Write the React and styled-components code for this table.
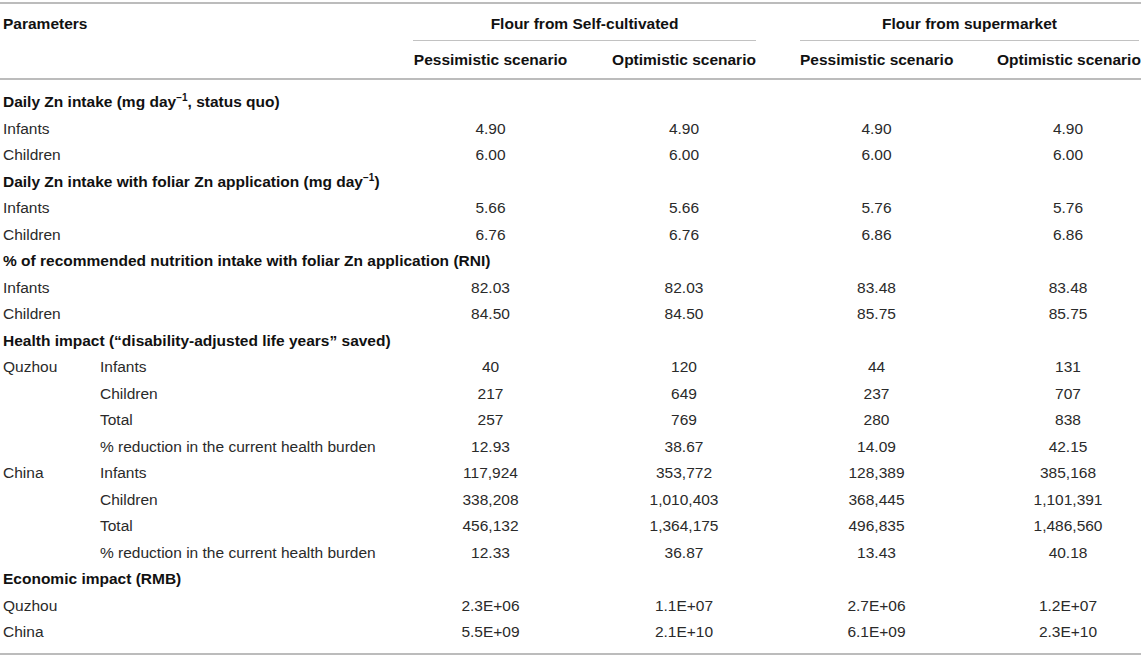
import React from 'react'
import styled, { createGlobalStyle } from 'styled-components'

const GlobalStyle = createGlobalStyle`
  html, body {
    margin: 0;
    padding: 0;
    background: #fff;
  }
  body {
    font-family: "Liberation Sans", Arial, Helvetica, sans-serif;
    color: #2a2a2a;
  }
`

const Page = styled.div`
  padding-top: 2px;
  width: 1143px;
`

const Table = styled.table`
  width: 1141px;
  table-layout: fixed;
  border-collapse: collapse;
  font-size: 15.5px;
  line-height: 18.5px;
  border-top: 2px solid #bcbcbc;
  border-bottom: 2px solid #bcbcbc;

  thead {
    border-bottom: 2px solid #bcbcbc;
  }
`

const Sup = styled.sup`
  font-size: 10px;
  line-height: 0;
  vertical-align: 6px;
`

const HeadCell = styled.th`
  text-align: left;
  vertical-align: top;
  font-weight: bold;
  color: #111;
  padding: 11px 3px 0;
`

const GroupCell = styled.th`
  padding: 11px 2px 0 42px;
  font-weight: bold;
  color: #111;
`

const GroupLabel = styled.div`
  text-align: center;
  padding-bottom: 6px;
  border-bottom: 1px solid #c2c2c2;
`

const ScenarioCell = styled.th`
  padding: 10px 2px 9px 42px;
  text-align: center;
  font-weight: bold;
  color: #111;
  white-space: nowrap;
`

const SectionCell = styled.td`
  padding: ${p => (p.$first ? '13px' : '4px')} 3px 4px;
  font-weight: bold;
  color: #111;
  white-space: nowrap;
`

const LabelCell = styled.td`
  padding: 4px 3px ${p => (p.$last ? '11px' : '4px')};
  white-space: nowrap;
`

const ValueCell = styled.td`
  padding: 4px 2px ${p => (p.$last ? '11px' : '4px')} 42px;
  text-align: center;
  white-space: nowrap;
`

const sections = [
  {
    title: <>Daily Zn intake (mg day<Sup>−1</Sup>, status quo)</>,
    rows: [
      { label: 'Infants', values: ['4.90', '4.90', '4.90', '4.90'] },
      { label: 'Children', values: ['6.00', '6.00', '6.00', '6.00'] },
    ],
  },
  {
    title: <>Daily Zn intake with foliar Zn application (mg day<Sup>−1</Sup>)</>,
    rows: [
      { label: 'Infants', values: ['5.66', '5.66', '5.76', '5.76'] },
      { label: 'Children', values: ['6.76', '6.76', '6.86', '6.86'] },
    ],
  },
  {
    title: '% of recommended nutrition intake with foliar Zn application (RNI)',
    rows: [
      { label: 'Infants', values: ['82.03', '82.03', '83.48', '83.48'] },
      { label: 'Children', values: ['84.50', '84.50', '85.75', '85.75'] },
    ],
  },
  {
    title: 'Health impact (“disability-adjusted life years” saved)',
    rows: [
      { region: 'Quzhou', label: 'Infants', values: ['40', '120', '44', '131'] },
      { region: '', label: 'Children', values: ['217', '649', '237', '707'] },
      { region: '', label: 'Total', values: ['257', '769', '280', '838'] },
      { region: '', label: '% reduction in the current health burden', values: ['12.93', '38.67', '14.09', '42.15'] },
      { region: 'China', label: 'Infants', values: ['117,924', '353,772', '128,389', '385,168'] },
      { region: '', label: 'Children', values: ['338,208', '1,010,403', '368,445', '1,101,391'] },
      { region: '', label: 'Total', values: ['456,132', '1,364,175', '496,835', '1,486,560'] },
      { region: '', label: '% reduction in the current health burden', values: ['12.33', '36.87', '13.43', '40.18'] },
    ],
  },
  {
    title: 'Economic impact (RMB)',
    rows: [
      { label: 'Quzhou', values: ['2.3E+06', '1.1E+07', '2.7E+06', '1.2E+07'] },
      { label: 'China', values: ['5.5E+09', '2.1E+10', '6.1E+09', '2.3E+10'] },
    ],
  },
]

const groups = ['Flour from Self-cultivated', 'Flour from supermarket']
const scenarios = ['Pessimistic scenario', 'Optimistic scenario']
const colWidths = [97, 274, 199, 188, 197, 186]

const App = () => {
  const lastSection = sections.length - 1
  return (
    <Page>
      <GlobalStyle />
      <Table>
        <colgroup>
          {colWidths.map((w, i) => <col key={i} style={{ width: w }} />)}
        </colgroup>
        <thead>
          <tr>
            <HeadCell colSpan={2} rowSpan={2}>Parameters</HeadCell>
            {groups.map(g => (
              <GroupCell key={g} colSpan={2}>
                <GroupLabel>{g}</GroupLabel>
              </GroupCell>
            ))}
          </tr>
          <tr>
            {groups.map(g => scenarios.map(s => (
              <ScenarioCell key={g + s}>{s}</ScenarioCell>
            )))}
          </tr>
        </thead>
        <tbody>
          {sections.map((section, si) => (
            <React.Fragment key={si}>
              <tr>
                <SectionCell colSpan={6} $first={si === 0}>{section.title}</SectionCell>
              </tr>
              {section.rows.map((row, ri) => {
                const last = si === lastSection && ri === section.rows.length - 1
                return (
                  <tr key={ri}>
                    {row.region !== undefined ? (
                      <>
                        <LabelCell $last={last}>{row.region}</LabelCell>
                        <LabelCell $last={last}>{row.label}</LabelCell>
                      </>
                    ) : (
                      <LabelCell colSpan={2} $last={last}>{row.label}</LabelCell>
                    )}
                    {row.values.map((v, vi) => (
                      <ValueCell key={vi} $last={last}>{v}</ValueCell>
                    ))}
                  </tr>
                )
              })}
            </React.Fragment>
          ))}
        </tbody>
      </Table>
    </Page>
  )
}

export default App
